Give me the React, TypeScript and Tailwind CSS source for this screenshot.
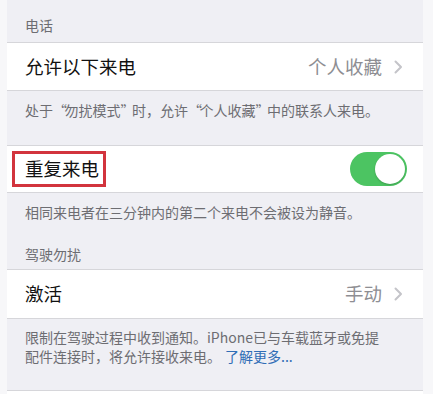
const font = { fontFamily: '"Noto Sans CJK SC", "Noto Sans", sans-serif' }

function Chevron() {
  return (
    <svg width="9" height="14" viewBox="0 0 9 14" className="shrink-0">
      <path d="M1.5 1.5 L7 7 L1.5 12.5" fill="none" stroke="#c4c4c9" strokeWidth="2" strokeLinecap="round" strokeLinejoin="round" />
    </svg>
  )
}

function Toggle() {
  return (
    <div className="w-[57px] h-[34px] rounded-full bg-[#4cc462] flex items-center justify-end pr-[2px]">
      <div className="w-[30px] h-[30px] rounded-full bg-white shadow-[0_1px_2px_rgba(0,0,0,0.2)]"></div>
    </div>
  )
}

export default function App() {
  return (
    <div className="w-[433px] h-[394px] bg-[#f7f7f9] overflow-hidden" style={font}>
      <div className="ml-[7px] w-[416px] h-full bg-[#efeff4] flex flex-col">
        {/* 电话 */}
        <div className="h-[42px] pt-[15px] pl-[18px] text-[14px] leading-[20px] text-[#6d6d72]">电话</div>

        <div className="h-[49px] bg-white border-y border-[#d6d6da] flex items-center pl-[18px] pr-[20px]">
          <span className="text-[18.5px] text-[#111]">允许以下来电</span>
          <span className="ml-auto text-[18.5px] text-[#8e8e93] mr-[12px]">个人收藏</span>
          <Chevron />
        </div>

        <div className="h-[54px] pt-[9px] pl-[18px] text-[14px] leading-[20px] text-[#6d6d72]">
          处于<span className="tracking-[-2.5px]">“</span>勿扰模式<span className="tracking-[-2.5px]">”</span>时，允许<span className="tracking-[-2.5px]">“</span>个人收藏<span className="tracking-[-2.5px]">”</span>中的联系人来电。
        </div>

        <div className="h-[48px] bg-white border-y border-[#d6d6da] flex items-center pl-[5px] pr-[16px]">
          <span className="h-[36px] border-[3px] border-[#d2343d] pl-[10px] pr-[4px] flex items-center text-[18.5px] text-[#111]">
            重复来电
          </span>
          <div className="ml-auto">
            <Toggle />
          </div>
        </div>

        <div className="h-[76px] pt-[9px] pl-[18px] flex flex-col text-[14px] leading-[20px] text-[#6d6d72]">
          <span>相同来电者在三分钟内的第二个来电不会被设为静音。</span>
          <span className="mt-[22px]">驾驶勿扰</span>
        </div>

        <div className="h-[50px] bg-white border-y border-[#d6d6da] flex items-center pl-[18px] pr-[20px]">
          <span className="text-[18.5px] text-[#111]">激活</span>
          <span className="ml-auto text-[18.5px] text-[#8e8e93] mr-[12px]">手动</span>
          <Chevron />
        </div>

        <div className="h-[72px] pt-[9px] pl-[18px] pr-[10px] text-[14px] leading-[19px] text-[#6d6d72] border-b border-[#d6d6da]">
          限制在驾驶过程中收到通知。iPhone已与车载蓝牙或免提
          <br />
          配件连接时，将允许接收来电。<span className="text-[#2f6db6] ml-[4px]">了解更多...</span>
        </div>

        <div className="flex-1 bg-white"></div>
      </div>
    </div>
  )
}
